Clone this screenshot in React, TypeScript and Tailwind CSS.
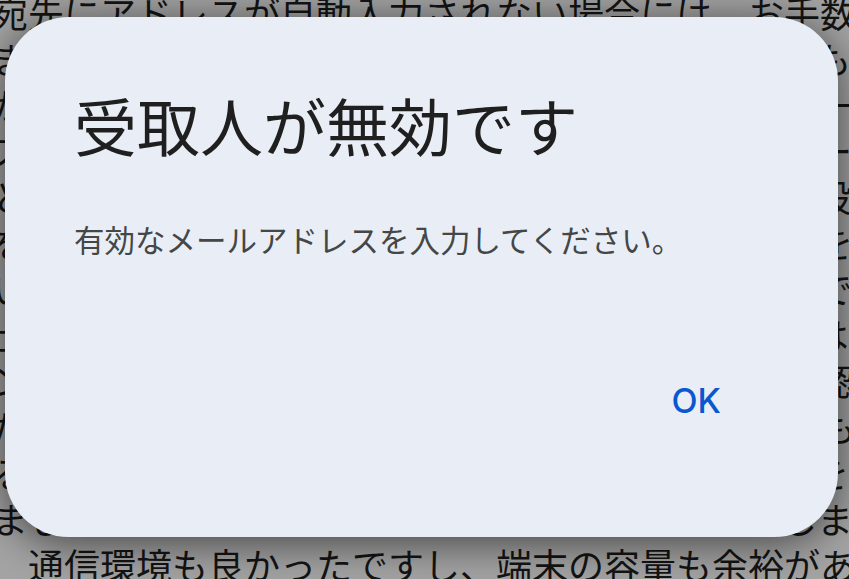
const pageLines = [
  "宛先にアドレスが自動入力されない場合には、お手数",
  "ますが直接入力してください。送信ボタンを押してもエラー",
  "が表示されるときは、入力内容を確認してからもう一度テ",
  "ストしてください。改行や空白が混ざっているとデータ",
  "として認識されないことがあります。アドレス帳の設定",
  "を見直しても解決しない場合は、サポートへご連絡を願",
  "います。受付時間は平日の午前九時から午後六時まで、2(",
  "土日祝日を除く）となっております。ご案内メールはイ",
  "ンターネット経由で届きますので、受信設定をご確認く",
  "ださい。迷惑メールフォルダに振り分けられることもあ",
  "るので、念のため確認しておくと安心です。ご不便をおか",
  "まして申し訳ありませんが、よろしくお願いいたします。し",
];

function DimmedPage() {
  return (
    <div className="-mt-[11px] -ml-[8px] font-['Noto_Sans_CJK_JP',sans-serif] text-[36px] leading-[46px] text-[#141414] whitespace-nowrap">
      {pageLines.map((line, i) => (
        <p key={i}>{line}</p>
      ))}
      <p className="pl-[36px]">通信環境も良かったですし、端末の容量も余裕があります。</p>
    </div>
  );
}

function InvalidRecipientDialog() {
  return (
    <div className="absolute left-[5px] top-[17px] flex h-[520px] w-[833px] flex-col rounded-[64px] bg-[#e9eef6] px-[69px] pt-[75px] shadow-[0_6px_44px_rgba(0,0,0,0.6)]">
      <h1 className="font-['Noto_Sans_CJK_JP',sans-serif] text-[63px] leading-none font-normal text-[#1f1f1f]">
        受取人が無効です
      </h1>
      <p className="mt-[69px] font-['Noto_Sans_CJK_JP',sans-serif] text-[30.5px] leading-none font-normal text-[#444746]">
        有効なメールアドレスを入力してください。
      </p>
      <div className="mt-[129px] flex justify-end pr-[48px]">
        <button className="font-['Inter',sans-serif] text-[34px] leading-none font-medium text-[#0b57d0]">
          OK
        </button>
      </div>
    </div>
  );
}

export default function App() {
  return (
    <div className="relative h-[579px] w-[849px] overflow-hidden bg-[#a4a4a4]">
      <DimmedPage />
      <InvalidRecipientDialog />
    </div>
  );
}
